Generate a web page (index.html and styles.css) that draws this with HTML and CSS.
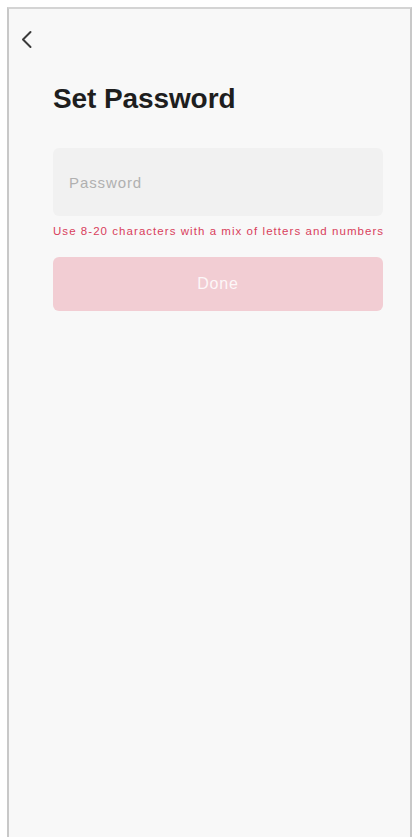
FILE: index.html
```html
<!DOCTYPE html>
<html>
<head>
<meta charset="utf-8">
<link rel="stylesheet" href="styles.css">
</head>
<body>
<div class="frame">
  <div class="screen">
    <div class="topbar">
      <svg class="back" width="13" height="19" viewBox="0 0 13 19"><path d="M10.5 2 L3 9.5 L10.5 17" fill="none" stroke="#3a3a3a" stroke-width="2" stroke-linecap="round" stroke-linejoin="round"/></svg>
    </div>
    <div class="content">
      <h1 class="title">Set Password</h1>
      <div class="field"><span class="placeholder">Password</span></div>
      <p class="hint">Use 8-20 characters with a mix of letters and numbers</p>
      <div class="btn">Done</div>
    </div>
  </div>
</div>
</body>
</html>
```
FILE: styles.css
```css
html, body {
  margin: 0;
  padding: 0;
  background: #ffffff;
  font-family: "Liberation Sans", Arial, sans-serif;
}
.frame {
  padding: 7px 3px 0 7px;
  height: 837px;
  box-sizing: border-box;
  overflow: hidden;
}
.screen {
  background: #f8f8f8;
  border-top: 2px solid #d4d4d4;
  border-left: 2px solid #c8c8c8;
  border-right: 2px solid #c8c8c8;
  height: 840px;
  box-sizing: border-box;
}
.topbar {
  height: 40px;
  padding: 21px 0 0 11px;
  box-sizing: border-box;
}
.back { display: block; }
.content {
  padding: 34px 0 0 44px;
  width: 330px;
}
.title {
  margin: 0;
  font-size: 28px;
  font-weight: 700;
  color: #1e1e1e;
  line-height: 32px;
  letter-spacing: -0.1px;
}
.field {
  margin-top: 33px;
  height: 68px;
  background: #f1f1f1;
  border-radius: 6px;
  display: flex;
  align-items: center;
  padding-left: 16px;
}
.placeholder {
  font-size: 15px;
  letter-spacing: 0.9px;
  color: #b0b0b0;
}
.hint {
  margin: 9px 0 0 0;
  font-size: 11.5px;
  letter-spacing: 1.05px;
  line-height: 13px;
  color: #d8405c;
  white-space: nowrap;
}
.btn {
  margin-top: 19px;
  height: 54px;
  background: #f2cdd3;
  border-radius: 6px;
  display: flex;
  align-items: center;
  justify-content: center;
  color: rgba(255, 255, 255, 0.85);
  font-size: 16px;
  letter-spacing: 0.8px;
}
```
